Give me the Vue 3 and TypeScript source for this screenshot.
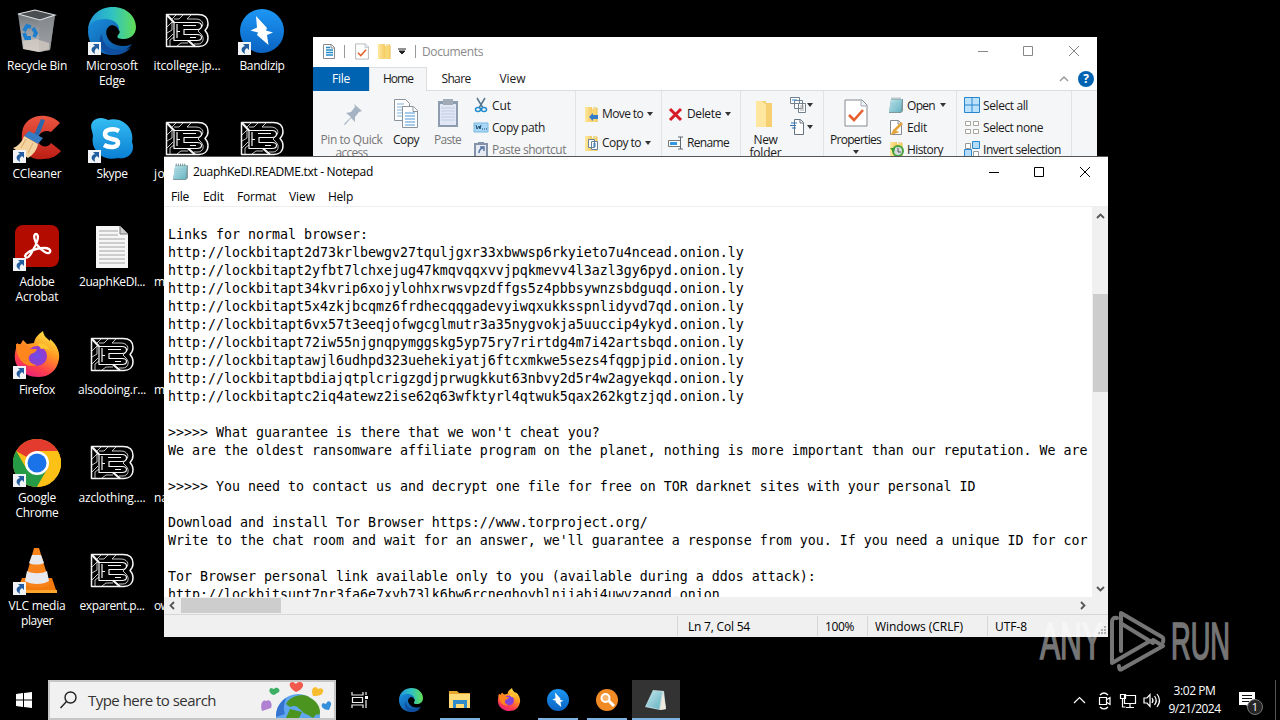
<script setup lang="ts">
import type { Directive } from 'vue'

interface DesktopLine { t: string; w: number }
interface DesktopItem { icon: string; lines: DesktopLine[]; shortcut?: boolean; left?: boolean }

/* Tunes letter spacing so a label takes the given width. */
const vFit: Directive<HTMLElement, number> = {
  mounted(el, binding) {
    const count = (el.textContent ?? '').trim().length
    const natural = el.getBoundingClientRect().width
    el.style.letterSpacing = `${(binding.value - natural) / count}px`
  },
}

const item = (icon: string, lines: [string, number][], shortcut = false, left = false): DesktopItem => ({
  icon,
  lines: lines.map(([t, w]) => ({ t, w })),
  shortcut,
  left,
})

const columns: DesktopItem[][] = [
  [
    item('bin', [['Recycle Bin', 60]]),
    item('ccleaner', [['CCleaner', 49]], true),
    item('acrobat', [['Adobe', 35], ['Acrobat', 43]], true),
    item('firefox', [['Firefox', 36]], true),
    item('chrome', [['Google', 38], ['Chrome', 43]], true),
    item('vlc', [['VLC media', 57], ['player', 32]], true),
  ],
  [
    item('edge', [['Microsoft', 52], ['Edge', 26]], true),
    item('skype', [['Skype', 31]], true),
    item('doc', [['2uaphKeDI...', 66]]),
    item('lockb', [['alsodoing.r...', 68]]),
    item('lockb', [['azclothing....', 67]]),
    item('lockb', [['exparent.p...', 65]]),
  ],
  [
    item('lockb', [['itcollege.jp...', 67]]),
    item('lockb', [['jo', 11]], false, true),
    item('none', [['m', 10]], false, true),
    item('none', [['m', 10]], false, true),
    item('none', [['na', 14]], false, true),
    item('none', [['ow', 15]], false, true),
  ],
  [item('bandizip', [['Bandizip', 45]], true), item('lockb', [])],
]

const note: string[] = [
  'Links for normal browser:',
  'http://lockbitapt2d73krlbewgv27tquljgxr33xbwwsp6rkyieto7u4ncead.onion.ly',
  'http://lockbitapt2yfbt7lchxejug47kmqvqqxvvjpqkmevv4l3azl3gy6pyd.onion.ly',
  'http://lockbitapt34kvrip6xojylohhxrwsvpzdffgs5z4pbbsywnzsbdguqd.onion.ly',
  'http://lockbitapt5x4zkjbcqmz6frdhecqqgadevyiwqxukksspnlidyvd7qd.onion.ly',
  'http://lockbitapt6vx57t3eeqjofwgcglmutr3a35nygvokja5uuccip4ykyd.onion.ly',
  'http://lockbitapt72iw55njgnqpymggskg5yp75ry7rirtdg4m7i42artsbqd.onion.ly',
  'http://lockbitaptawjl6udhpd323uehekiyatj6ftcxmkwe5sezs4fqgpjpid.onion.ly',
  'http://lockbitaptbdiajqtplcrigzgdjprwugkkut63nbvy2d5r4w2agyekqd.onion.ly',
  'http://lockbitaptc2iq4atewz2ise62q63wfktyrl4qtwuk5qax262kgtzjqd.onion.ly',
  '',
  ">>>>> What guarantee is there that we won't cheat you?",
  'We are the oldest ransomware affiliate program on the planet, nothing is more important than our reputation. We are',
  '',
  '>>>>> You need to contact us and decrypt one file for free on TOR darknet sites with your personal ID',
  '',
  'Download and install Tor Browser https://www.torproject.org/',
  "Write to the chat room and wait for an answer, we'll guarantee a response from you. If you need a unique ID for cor",
  '',
  'Tor Browser personal link available only to you (available during a ddos attack):',
  'http://lockbitsupt7nr3fa6e7xyb73lk6bw6rcneqhoyblniiabj4uwvzapqd.onion',
]
</script>

<template>
  <div class="desktop">
    <svg class="defs" width="0" height="0">
      <defs>
        <linearGradient id="gBin" x1="0" y1="0" x2="0" y2="1"><stop offset="0" stop-color="#70757a" /><stop offset=".6" stop-color="#a5a9ad" /><stop offset="1" stop-color="#c9c6c2" /></linearGradient>
        <linearGradient id="gEdgeA" x1="0" y1=".3" x2="1" y2=".3"><stop offset="0" stop-color="#2196d6" /><stop offset=".5" stop-color="#2fc2c4" /><stop offset="1" stop-color="#62de55" /></linearGradient>
        <linearGradient id="gEdgeB" x1="0" y1="0" x2="1" y2="1"><stop offset="0" stop-color="#1a8fdc" /><stop offset="1" stop-color="#0b4a97" /></linearGradient>
        <linearGradient id="gFox" x1=".8" y1="0" x2=".3" y2="1"><stop offset="0" stop-color="#fff04a" /><stop offset=".4" stop-color="#ff9a22" /><stop offset=".75" stop-color="#ff3f4b" /><stop offset="1" stop-color="#e5217a" /></linearGradient>
        <radialGradient id="gFoxIn"><stop offset="0" stop-color="#6b4de8" /><stop offset="1" stop-color="#9a38c9" /></radialGradient>
        <linearGradient id="gBandi" x1="0" y1="0" x2="0" y2="1"><stop offset="0" stop-color="#1d97f5" /><stop offset="1" stop-color="#0a63c2" /></linearGradient>
        <linearGradient id="gSkype" x1="0" y1="0" x2="0" y2="1"><stop offset="0" stop-color="#35bdf2" /><stop offset="1" stop-color="#0a7fd4" /></linearGradient>
        <linearGradient id="gCc" x1="0" y1="0" x2="0" y2="1"><stop offset="0" stop-color="#ea5540" /><stop offset="1" stop-color="#bd1d14" /></linearGradient>
        <linearGradient id="gPad" x1="0" y1="0" x2="1" y2="1"><stop offset="0" stop-color="#c4e8ee" /><stop offset="1" stop-color="#63b2c0" /></linearGradient>
        <linearGradient id="gFold" x1="0" y1="0" x2="1" y2="0"><stop offset="0" stop-color="#ffe9a0" /><stop offset="1" stop-color="#f4cb62" /></linearGradient>

        <symbol id="none" viewBox="0 0 48 48" />
        <symbol id="bin" viewBox="0 0 48 48">
          <path d="M5 7 42 8 37 43 26 45 10 42Z" fill="url(#gBin)" />
          <path d="M26 12 42 8 37 43 26 45Z" fill="#8b8e91" opacity=".65" />
          <path d="M5 7 22 3 42 8 27 13Z" fill="#4b4e50" stroke="#dfe2e4" stroke-width="1.1" />
          <path d="M10 34 23 32 36 36 36 42 26 45 11 42Z" fill="#d9cfc6" opacity=".7" />
          <g fill="none" stroke="#1b7fcd" stroke-width="3.800"><path d="m11 24 3-5 4 1" /><path d="m20 21 3 5-2 4" /><path d="m18 31-5 0-2-5" /></g>
        </symbol>
        <symbol id="edge" viewBox="0 0 48 48">
          <path d="M0 22C2 7 13 0 25 0c14 0 23 10 23 20 0 8-6 12-12 12-5 0-8-1-6-4 2-2 2-3 1-5-2-5-6-7-12-7C12 15 4 17 0 22Z" fill="url(#gEdgeA)" />
          <path d="M0 24C0 16 8 12 17 12c9 0 15 5 14 12-2-5-6-6-9-5-8 4-3 20 13 20 4 0 7-1 9-2-4 5-11 11-19 11C10 48 0 38 0 24Z" fill="url(#gEdgeB)" />
          <path d="M14 27c0 11 9 17 20 16 4 0 7-1 10-4-4 6-11 9-18 9C12 47 9 33 14 27Z" fill="#104f9f" />
          <path d="M19 25c0-5 4-8 8-6 4 2 4 6 3 8-2 3-1 5 1 7-7-1-12-4-12-9Z" fill="#000" />
        </symbol>
        <symbol id="lockb" viewBox="0 0 48 48" fill="none" stroke="#f4f4f4" stroke-linejoin="round">
          <path d="M3.500 7.500H35c7 0 10 4 10 9 0 3-1 5-3 7 2 2 3 4 3 7 0 6-4 9-9 9H3.500Z" stroke-width="1.500" />
          <path d="M11 15.500H34c6 0 6 7 0 7H21v5h13c6 0 6 6 0 6H11ZM14 17v14" stroke-width="1.200" />
          <path d="M20 18.500h13M17 24.500h-3M27 30.500h6" stroke-width="1" />
          <path d="M4 20l6-6M4 33l6-6M4 26l5-3v-8M7 39v-6l4-3M13 8l-4 4M20 8l-4 4h-5M28 8l-4 4h9c6 0 9 5 5 9l-3 3 3 3c4 4 2 10-3 10h-4M14 39l4-3h7" stroke-width=".8" />
          <path d="m4 8 7 7.500M25 33.500l7 6" stroke-width="2.200" />
        </symbol>
        <symbol id="bandizip" viewBox="0 0 48 48">
          <circle cx="24" cy="24" r="22" fill="url(#gBandi)" />
          <path d="m18 9 11 12-1 2.500 7 2-6 2.500 1.500 10L19 28l1-2.500-7.500-2 6.500-3Z" fill="#fff" />
        </symbol>
        <symbol id="ccleaner" viewBox="0 0 48 48">
          <path d="M47 8C35-4 11-1 9 18c-2 20 10 28 21 26 8 0 14-3 18-8L38 28c-2 4-9 5-12 0-4-7 4-15 12-11Z" fill="url(#gCc)" />
          <path d="M28 4l4 1-7 18-5-1Z" fill="#2b67ad" />
          <path d="m16 16 14 7-5 6-14-8Z" fill="#377bc2" />
          <path d="m11 21 14 8c-1 6-5 11-10 14L0 33c5-2 9-6 11-12Z" fill="#f3d3a0" />
          <path d="m8 33 5-9M15 38l5-10" stroke="#dca866" />
        </symbol>
        <symbol id="skype" viewBox="0 0 48 48">
          <path d="M4 16C1 8 6 3 13 3c3 0 5 1 7 2C35 1 47 14 44 27c4 10-4 18-14 16C15 47 2 35 5 21Z" fill="url(#gSkype)" />
          <path d="M31 16c-5-3-14-2-14 3 0 7 13 3 13 9 0 5-9 5-14 2" fill="none" stroke="#fff" stroke-width="4.500" />
        </symbol>
        <symbol id="acrobat" viewBox="0 0 48 48">
          <rect x="2" y="2" width="44" height="42" rx="8" fill="#b30b00" />
          <path d="M12 33c2-5 12-8 19-8 5 0 7 2 6 4-2 3-8-1-12-6-4-5-5-12-2-12 4 0 1 10-3 16-3 6-6 10-8 6Z" fill="none" stroke="#fff" stroke-width="2.300" />
        </symbol>
        <symbol id="firefox" viewBox="0 0 48 48">
          <path d="m2 22 2-10 3 2 3-5 4 4 7-1c1-6 5-9 9-12 1 6 4 7 7 10V8c8 6 10 15 9 20-2 12-10 18-21 18C10 46 0 35 2 22Z" fill="url(#gFox)" />
          <circle cx="24" cy="25" r="10" fill="url(#gFoxIn)" />
          <path d="M3 13c7 0 11 2 13 5h8c-1 4-5 4-7 6-3 3-1 9 7 10-13 4-21-7-21-21Z" fill="#ff861e" />
          <path d="M25 13c5-2 10 1 12 7-3-3-6-3-9-2Z" fill="#ffc633" />
        </symbol>
        <symbol id="chrome" viewBox="0 0 48 48">
          <circle cx="24" cy="24" r="24" fill="#fbc116" />
          <path d="M24 24 3.200 12A24 24 0 0 1 44.800 12L24 12Z" fill="#e33b2e" />
          <path d="M3.200 12A24 24 0 0 0 24 48L34.400 30 24 36 13.600 30Z" fill="#259b45" />
          <path d="M44.800 12A24 24 0 0 1 24 48L34.400 30 24 12Z" fill="#fbc116" />
          <circle cx="24" cy="24" r="12" fill="#fff" /><circle cx="24" cy="24" r="9.500" fill="#1a73e8" />
        </symbol>
        <symbol id="vlc" viewBox="0 0 48 48">
          <path d="M9 31h30l5 15H3Z" fill="#f27b0c" /><path d="M4 43h40v3H4Z" fill="#ffa52e" />
          <path d="m21 1 5 0 11 36c-5 5-21 5-26 0Z" fill="#f8831a" />
          <path d="m19 8 9 0 3 8c-4 2-11 2-15 0ZM14 24c5 3 15 3 20 0l2 10c-6 4-18 4-24 0Z" fill="#e8e9ec" />
        </symbol>
        <symbol id="doc" viewBox="0 0 48 48">
          <path d="M8 3h24l8 8v34H8Z" fill="#f6f6f6" /><path d="M32 3v8h8" fill="#ccc" stroke="#777" />
          <path d="M11 8h19M11 12h19M11 16h26M11 20h26M11 24h26M11 28h26M11 32h26M11 36h26M11 40h26" stroke="#a3a3a3" stroke-width="1.200" />
        </symbol>
        <symbol id="arrow" viewBox="0 0 13 13"><path d="M0 0h13v13H0Z" fill="#f1f3f6" /><path d="M5 2h6v6L9 6c-2 1-3 3-2 6-5-3-4-7 0-8Z" fill="#235d9f" /></symbol>

        <symbol id="pad" viewBox="0 0 16 16">
          <path d="M3 2h12v12l-2 2H1Z" fill="#7c989b" /><path d="M3 2h11l-1 13H1Z" fill="url(#gPad)" />
          <path d="M4 .5v2.500M6 .5v2.500M8 .5v2.500M10 .5v2.500M12 .5v2.500" stroke="#6c8688" stroke-width=".8" /><path d="M3 6h9M3 8h9M3 10h9" stroke="#8ac5ce" stroke-width=".6" />
        </symbol>
        <symbol id="folder" viewBox="0 0 16 16"><path d="M2 1h7v2h5v13H2Z" fill="#f8d775" /><path d="M2 1h7v14l-7 1Z" fill="url(#gFold)" /><path d="M10 2h4v14" fill="none" stroke="#eabe49" /></symbol>
        <symbol id="page" viewBox="0 0 16 16"><path d="M2.500 1.500h8l3 3v11h-11Z" fill="#fff" stroke="#858b91" /><path d="M10 1.500v3.500h3.500" fill="none" stroke="#858b91" /></symbol>
        <symbol id="pagecheck" viewBox="0 0 24 28"><path d="M1 1h17l5 5v21H1Z" fill="#fff" stroke="#858b91" /><path d="M17 1v6h6" fill="#e7eef5" stroke="#a7adb3" /><path d="m5 16 5 5 9-10" fill="none" stroke="#e6602d" stroke-width="2.600" /></symbol>
        <symbol id="taskFolder" viewBox="0 0 24 24"><path d="M1 3h8l2 2h11v15H1Z" fill="#e7a72f" /><path d="M1 6h21v14H1Z" fill="#ffdc78" /><path d="M5 12h14v8h-3v-4H8v4H5Z" fill="#318cca" /></symbol>
      </defs>
    </svg>

    <main class="icons">
      <div v-for="(col, c) in columns" :key="c" class="icon-column">
        <div v-for="(entry, i) in col" :key="i" class="shortcut" :class="{ left: entry.left }">
          <div class="picture">
            <svg width="48" height="48"><use :href="'#' + entry.icon" /></svg>
            <svg v-if="entry.shortcut" class="badge" width="13" height="13"><use href="#arrow" /></svg>
          </div>
          <div v-for="line in entry.lines" :key="line.t" class="name"><span v-fit="line.w">{{ line.t }}</span></div>
        </div>
      </div>
    </main>

    <section class="explorer">
      <header class="ex-title">
        <svg width="16" height="16"><use href="#page" /><path d="M5 4.500h4M5 7h7M5 9.500h7M5 12h7" stroke="#238ac6" stroke-width="1.500" /></svg>
        <i class="tick" />
        <svg class="q1" width="14" height="17"><use href="#pagecheck" width="14" height="17" /></svg>
        <svg class="q2" width="16" height="16"><use href="#folder" /></svg>
        <svg class="q3" width="8" height="7"><path d="M0 1h8M1 3h6L4 6Z" stroke="#222" stroke-width="1" fill="#222" /></svg>
        <i class="tick second" />
        <span v-fit="61" class="ex-name">Documents</span>
        <svg class="controls" width="102" height="12" fill="none" stroke="#888"><path d="M0 6.500h10M45.500 1.500h9v9h-9ZM91 1l10 10M101 1 91 11" /></svg>
      </header>
      <nav class="tabs">
        <div class="tab file"><span v-fit="18">File</span></div>
        <div class="tab home"><span v-fit="30">Home</span></div>
        <div class="tab share"><span v-fit="29">Share</span></div>
        <div class="tab view"><span v-fit="26">View</span></div>
        <svg class="collapse" width="10" height="7"><path d="m1 6 4-4 4 4" fill="none" stroke="#999" stroke-width="1.500" /></svg>
        <div class="help">?</div>
      </nav>
      <div class="ribbon">
        <div class="group clip">
          <div class="big pin dim"><svg width="26" height="32"><path d="m15 6 8 7-3 1-4 5v5l-4-4-6 7-1-1 7-7-5-4 5-1 4-5Z" fill="#a5b3c2" /></svg><span v-fit="62">Pin to Quick</span><span v-fit="32">access</span></div>
          <div class="big copy"><svg width="26" height="32" fill="#fff" stroke="#8b949c"><path d="M1.500 1.500h11l4 4v17h-15Z" /><path d="M4 6h7M4 9h9M4 12h9M4 15h9M4 18h9" stroke="#7fb1dc" /><path d="M9.500 8.500h11l4 4v17h-15Z" /><path d="M20 8.500v5h5" /><path d="M12 15h10M12 18h10M12 21h10M12 24h10M12 27h10" stroke="#4d95d6" /></svg><span v-fit="26">Copy</span></div>
          <div class="big paste dim"><svg width="22" height="32"><path d="M1 3h20v26H1Z" fill="#8e9caf" /><path d="M3 6h16v21H3Z" fill="#e0e8f5" /><path d="M6 1h10v6H6Z" fill="#a2abb9" /><path d="M4 10h14M4 13h14M4 16h14M4 19h14M4 22h14" stroke="#c1cde3" /></svg><span v-fit="27">Paste</span></div>
          <div class="small-list">
            <div class="small"><svg width="16" height="16" fill="none" stroke="#57778f" stroke-width="1.500"><path d="m4 1 6 10M12 1 6 11" /><ellipse cx="5" cy="12.500" rx="2.500" ry="2" stroke="#218bd0" /><ellipse cx="11" cy="12.500" rx="2.500" ry="2" stroke="#218bd0" /></svg><span v-fit="19">Cut</span></div>
            <div class="small"><svg width="16" height="16"><path d="M1 4h14v9H1Z" fill="#a9d7f7" stroke="#79b5df" /><path d="m3 6 1 4 2-3 1 3 1-4M9 10h1M11 10h1M13 10h1" fill="none" stroke="#17476b" /></svg><span v-fit="53">Copy path</span></div>
            <div class="small dim"><svg width="16" height="16"><path d="M2 3h12v13H2Z" fill="#e5eaf3" stroke="#8493aa" stroke-width="2" /><path d="M5 1h6v3H5Z" fill="#8493aa" /><path d="M6 12q0-4 4-5M7 6h4v4" fill="none" stroke="#5976a2" stroke-width="1.500" /></svg><span v-fit="74">Paste shortcut</span></div>
          </div>
        </div>
        <div class="group organize move">
          <div class="small"><svg width="16" height="16"><use href="#folder" /><path d="m6 11 4-4v2h5v4h-5v2Z" fill="#347dcb" /></svg><span v-fit="41">Move to</span><i class="caret" /></div>
          <div class="small"><svg width="16" height="16"><use href="#folder" /><path d="M5.500 4.500h6v8h-6ZM8.500 6.500h6v8h-6Z" fill="#fff" stroke="#66839b" /><path d="M10 9h3M10 11h3" stroke="#3384c4" /></svg><span v-fit="39">Copy to</span><i class="caret" /></div>
        </div>
        <div class="group organize remove">
          <div class="small"><svg width="16" height="16"><path d="m2 3 11 11M13 3 2 14" stroke="#d51b25" stroke-width="3" /></svg><span v-fit="34">Delete</span><i class="caret" /></div>
          <div class="small"><svg width="16" height="16"><path d="M.5 5.500h12v6H.5Z" fill="#fff" stroke="#777" /><path d="M2 7h7v3H2Z" fill="#3297e2" /><path d="M10 2h5M12.500 2v12M10 14h5" stroke="#656b72" /></svg><span v-fit="42">Rename</span></div>
        </div>
        <div class="group new">
          <div class="big"><svg width="28" height="32"><path d="M4 3h10v2h6v24H4Z" fill="#f5cf70" /><path d="M4 3h6l4 4v22H4Z" fill="#ffe7a0" /></svg><span v-fit="24">New</span><span v-fit="32">folder</span></div>
          <div class="small-list">
            <div class="small"><svg width="17" height="16" fill="#fff" stroke="#72818e"><path d="M.5.500h9v6h-9ZM4.500 3.500h8v8h-8ZM8.500 6.500h7v9h-7Z" /><path d="M2 3h5" stroke="#2787c7" /><path d="M10 9h4M10 11h4M10 13h4" stroke="#aaa" /></svg><i class="caret" /></div>
            <div class="small"><svg width="17" height="16" fill="#fff" stroke="#66727d"><path d="M4.500.500h6l3 3v12h-9Z" /><path d="M10 .5V4h3" /><path d="M1 4h6M0 6.500h6M2 9h4" stroke="#2f77bc" /></svg><i class="caret" /></div>
          </div>
        </div>
        <div class="group open">
          <div class="big prop"><svg width="24" height="32"><use href="#pagecheck" y="1" width="24" height="28" /></svg><span v-fit="51">Properties</span><i class="caret" /></div>
          <div class="small-list">
            <div class="small"><svg width="16" height="16"><use href="#pad" /></svg><span v-fit="28">Open</span><i class="caret" /></div>
            <div class="small"><svg width="16" height="16"><use href="#page" /><path d="m6 12 8-8M5 14l1-2 2 1Z" stroke="#e4a43c" stroke-width="2.500" /></svg><span v-fit="20">Edit</span></div>
            <div class="small"><svg width="16" height="16"><use href="#folder" /><circle cx="10" cy="10" r="5" fill="#d3dde0" stroke="#48a43c" stroke-width="2" /><path d="M10 7v4h3" stroke="#555" fill="none" /><path d="m2 7 5 0-1 5Z" fill="#3a9d34" /></svg><span v-fit="36">History</span></div>
          </div>
        </div>
        <div class="group select">
          <div class="small-list">
            <div class="small"><svg width="16" height="16"><path d="M.5.500h15v15H.5ZM8 1v14M1 8h14" fill="#bce2fb" stroke="#2886cf" /></svg><span v-fit="45">Select all</span></div>
            <div class="small"><svg width="16" height="16" fill="#fff" stroke="#aaa59d"><path d="M1.500 2.500h5v4h-5ZM9.500 2.500h5v4h-5ZM1.500 10.500h5v4h-5ZM9.500 10.500h5v4h-5Z" /></svg><span v-fit="60">Select none</span></div>
            <div class="small"><svg width="16" height="16"><path d="M8.500.500h7v7h-7ZM.5 8.500h7v7h-7Z" fill="#b3dcfa" stroke="#2d87cc" /><path d="M1.500 2.500h5v5h-5ZM9.500 10.500h5v5h-5Z" fill="#fff" stroke="#999" /></svg><span v-fit="78">Invert selection</span></div>
          </div>
        </div>
      </div>
    </section>

    <section class="notepad">
      <header class="np-title">
        <svg width="17" height="17"><use href="#pad" /></svg><span v-fit="180">2uaphKeDI.README.txt - Notepad</span>
        <svg class="controls" width="102" height="12" fill="none" stroke="#000"><path d="M0 6.500h10M45.500 1.500h9v9h-9ZM91 1l10 10M101 1 91 11" /></svg>
      </header>
      <nav class="menu">
        <div class="m-file"><span v-fit="18">File</span></div><div class="m-edit"><span v-fit="21">Edit</span></div><div class="m-format"><span v-fit="39">Format</span></div><div class="m-view"><span v-fit="26">View</span></div><div><span v-fit="25">Help</span></div>
      </nav>
      <div class="editor">
        <div class="sheet"><div v-for="(line, i) in note" :key="i" class="line">{{ line }}</div></div>
        <div class="vbar">
          <svg width="9" height="6"><path d="m1 5 3.500-3.500L8 5" /></svg><div class="vthumb" /><svg width="9" height="6"><path d="m1 1 3.500 3.500L8 1" /></svg>
        </div>
      </div>
      <div class="hbar"><svg width="6" height="9"><path d="M5 1 1.500 4.500 5 8" /></svg><div class="hthumb" /><svg class="hright" width="6" height="9"><path d="m1 1 3.500 3.500L1 8" /></svg></div>
      <footer class="status">
        <div class="s-pos"><span v-fit="62">Ln 7, Col 54</span></div><div class="s-zoom"><span v-fit="29">100%</span></div><div class="s-eol"><span v-fit="88">Windows (CRLF)</span></div>
        <div class="s-enc"><span v-fit="32">UTF-8</span><svg class="grip" width="9" height="9" fill="#b0b0b0"><path d="M6 0h2v2H6ZM3 3h2v2H3ZM6 3h2v2H6ZM0 6h2v2H0ZM3 6h2v2H3ZM6 6h2v2H6Z" /></svg></div>
      </footer>
    </section>

    <footer class="taskbar">
      <div class="start"><svg width="16" height="16" fill="#fff"><path d="M0 2 7 1v6.500H0ZM8 1l8-1v7.500H8ZM0 8.500h7V15l-7-1ZM8 8.500h8V16l-8-1Z" /></svg></div>
      <div class="search">
        <svg width="18" height="18" fill="none" stroke="#222" stroke-width="1.400"><circle cx="10.500" cy="6.500" r="5.500" /><path d="m6.500 10.500-6 6.500" /></svg><span v-fit="128">Type here to search</span>
        <svg class="earth" width="72" height="38">
          <circle cx="38" cy="36" r="22" fill="#5fa6ef" /><path d="M26 24c4-8 18-12 24-6 8 3 12 13 9 17-5-3-3 5-8 2-4-4-7-2-9-6-4-2-4-7-12-4ZM30 29l12 3-3 6H26Z" fill="#4a941f" /><path d="M16 37c0-9 4-15 10-19-2 7-3 10-1 16Z" fill="#3474ce" />
          <path d="M36 12c-7-4-8-9-4-10 2 0 3 1 4 2 1-3 8-3 7 2-1 3-4 5-7 6Z" fill="#f25a4d" />
          <path d="M14 15c-5-1-6-6-3-7l3 1c2-3 7 0 5 3Z" fill="#3caf65" /><path d="M53 16c-2-5-1-9 3-9l2 2c3-2 6 0 5 3-1 4-6 4-10 4Z" fill="#f8bc31" />
          <path d="M2 31c-2-6 0-12 4-10 4-3 7 3 5 7Z" fill="#b080d3" /><path d="M69 30c-7 0-9-5-6-7l3 1c2-5 6-2 5 1Z" fill="#368fda" />
        </svg>
      </div>
      <div class="task view-btn"><svg width="18" height="18" fill="none" stroke="#eee" stroke-width="1.200"><path d="M1 1v3h11V1M1 17v-3h11v3M1.500 6.500h10v5h-10ZM15 1v3M15 9v8" /><path d="M14 5h3v3h-3Z" fill="#fff" stroke="none" /></svg></div>
      <div class="task t-edge"><svg width="24" height="24"><use href="#edge" /></svg></div>
      <div class="task run gap9"><svg width="24" height="24"><use href="#taskFolder" /></svg></div>
      <div class="task gap9"><svg width="24" height="24"><use href="#firefox" /></svg></div>
      <div class="task run gap9"><svg width="24" height="24"><use href="#bandizip" /></svg></div>
      <div class="task run gap9"><svg width="24" height="24"><circle cx="12" cy="12" r="11" fill="#f08a24" /><circle cx="10.500" cy="10" r="4" fill="#f8b570" stroke="#fff" stroke-width="2" /><path d="m14 13 5 5" stroke="#fff" stroke-width="3" /></svg></div>
      <div class="task run active"><svg width="24" height="24"><path d="m9 2 11 1 2 18-6 1-15-3Z" fill="#b9d5da" /><path d="m9 3 9 1-3 17-13-3Z" fill="url(#gPad)" /><path d="m19 3 3 18-6 1Z" fill="#efeadc" /></svg></div>
      <div class="tray">
        <svg width="90" height="20" fill="none" stroke="#fff" stroke-width="1.200">
          <path d="m1 13 5.500-5.500 5.500 5.500M26.500 7.500h7v7h-7ZM34 9.500l3-2v7l-3-2M27 5q4-4 8 0M27 17q4 4 8 0" />
          <path d="M51.500 5.500h11v8h-11ZM57 14v3M53 17.500h8M47.500 4.500h5v4h-5ZM49.500 9v8h3" /><path d="M71 8h3l3-3.500v12L74 13h-3ZM79 8q2 2.500 0 5M81.500 6q3.500 4.500 0 9M84 4q5 6.500 0 13" />
        </svg>
      </div>
      <div class="clock"><div><span v-fit="42">3:02 PM</span></div><div><span v-fit="52">9/21/2024</span></div></div>
      <div class="notice"><svg width="17" height="17"><path d="M0 0h16v13h-5v4l-4-4H0Z" fill="#fff" /><path d="M3 3.500h10M3 6.500h10M3 9.500h7" stroke="#111" /></svg><b>1</b></div>
      <i class="peek" />
    </footer>

    <svg class="watermark" width="196" height="64" fill="#fff">
      <text x="3" y="50" textLength="62" lengthAdjust="spacingAndGlyphs">ANY</text>
      <text x="134" y="50" textLength="59" lengthAdjust="spacingAndGlyphs">RUN</text>
      <g fill="none" stroke="#fff" stroke-width="4" stroke-linejoin="round" stroke-linecap="round"><path d="M80 9q-5-1-5 4v41l38-22M84 42V4l41 24q2 1 1 5M85 15l31 19" /><path d="m116 31 10 6-41 23q-3 2-3-3" /></g>
    </svg>
  </div>
</template>

<style>
html, body { margin: 0; background: #000; overflow: hidden; }
</style>

<style scoped>
.desktop { position: relative; width: 1280px; height: 720px; overflow: hidden; background: #000; font: 12px/15px "Open Sans", "Noto Sans", sans-serif; color: #1a1a1a; white-space: nowrap; }
.desktop * { box-sizing: border-box; }
svg { display: block; flex: none; }
.defs { position: absolute; }
.icons { display: flex; height: 680px; }
.icon-column { display: flex; flex-direction: column; width: 75px; }
.shortcut { height: 108px; padding-top: 7px; width: 74px; display: flex; flex-direction: column; align-items: center; color: #fff; }
.shortcut.left { align-items: flex-start; padding-left: 4px; }
.shortcut.left .picture { margin-left: 9px; }
.picture { position: relative; width: 48px; height: 48px; margin-bottom: 3px; }
.badge { position: absolute; left: 0; bottom: 0; }
.name { height: 15px; line-height: 15px; }

.explorer { position: absolute; left: 313px; top: 37px; width: 784px; height: 125px; background: #fff; display: flex; flex-direction: column; }
.ex-title { height: 30px; display: flex; align-items: center; padding: 0 17px 2px 8px; color: #8a8a8a; }
.tick { width: 1px; height: 13px; background: #999; margin-left: 7px; }
.q1 { margin-left: 10px; }
.q2 { margin-left: 7px; }
.q3 { margin-left: 6px; }
.tick.second { margin-left: 9px; }
.ex-name { margin-left: 6px; }
.controls { margin-left: auto; }
.tabs { height: 24px; display: flex; align-items: center; border-bottom: 1px solid #dcdddf; flex: none; }
.tab { height: 24px; display: flex; align-items: center; justify-content: center; }
.file { width: 56px; background: #0063b1; color: #fff; }
.home { width: 58px; background: #f5f6f7; border: 1px solid #dcdddf; border-bottom: 0; padding-bottom: 2px; }
.share { width: 58px; }
.view { width: 55px; }
.collapse { margin-left: auto; }
.help { width: 16px; height: 16px; margin: 0 3px 0 9px; border-radius: 50%; background: #0063b1; color: #fff; text-align: center; line-height: 16px; font-weight: 700; }
.ribbon { flex: 1; display: flex; background: #f5f6f7; overflow: hidden; }
.group { height: 80px; padding-top: 3px; border-right: 1px solid #e1e3e5; display: flex; flex: none; }
.clip { width: 263px; }
.big { display: flex; flex-direction: column; align-items: center; line-height: 13px; padding-top: 4px; }
.big > svg { margin-bottom: 3px; }
.pin { width: 77px; }
.copy { width: 32px; }
.paste { width: 51px; }
.dim { color: #777; }
.small-list { display: flex; flex-direction: column; }
.small { height: 22px; display: flex; align-items: center; gap: 3px; }
.caret { width: 0; height: 0; border: 3px solid transparent; border-top: 4px solid #333; border-bottom: 0; margin-left: 2px; }
.organize { flex-direction: column; padding-top: 8px; }
.organize .small { height: 29px; }
.organize .caret { margin-left: 1px; }
.move { width: 86px; padding-left: 7px; }
.remove { width: 79px; padding-left: 6px; }
.new { width: 83px; }
.new .big { width: 49px; }
.new .caret { margin-left: -3px; }
.open { width: 133px; padding-left: 6px; }
.prop { width: 51px; margin-right: 7px; }
.prop .caret { margin: 4px 0 0; }
.select { width: 115px; padding-left: 7px; }

.notepad { position: absolute; left: 164px; top: 156px; width: 944px; height: 481px; background: #fff; border-top: 1px solid #555; display: flex; flex-direction: column; color: #000; }
.np-title { height: 30px; display: flex; align-items: center; padding: 0 17px 2px 8px; gap: 4px; }
.np-title .controls { margin-top: 1px; }
.menu { height: 20px; display: flex; padding-left: 7px; align-items: center; border-bottom: 1px solid #eee; }
.m-file { width: 32px; }
.m-edit { width: 34px; }
.m-format { width: 52px; }
.m-view { width: 39px; }
.editor { height: 390px; display: flex; }
.sheet { width: 924px; height: 390px; overflow: hidden; padding: 19px 0 0 4px; margin-right: 4px; font: 13.29px/18px "DejaVu Sans Mono", monospace; color: #000; }
.line { height: 18px; white-space: pre; }
.vbar { width: 16px; background: #f0f0f0; display: flex; flex-direction: column; align-items: center; padding: 6px 0 5px; }
.vthumb { width: 15px; height: 98px; background: #cdcdcd; margin: 75px 0 auto; }
.vbar svg, .hbar svg { fill: none; stroke: #555; stroke-width: 1.8; }
.hbar { height: 17px; background: #f0f0f0; display: flex; align-items: center; padding-left: 5px; }
.hthumb { width: 100px; height: 15px; background: #cdcdcd; margin-left: 6px; }
.hright { margin: 0 22px 0 auto; }
.status { height: 23px; background: #f0f0f0; border-top: 1px solid #d7d7d7; display: flex; justify-content: flex-end; }
.status div { border-left: 1px solid #d7d7d7; display: flex; align-items: center; height: 20px; margin-top: 1px; }
.s-pos { width: 140px; padding-left: 10px; }
.s-zoom { width: 50px; padding-left: 7px; }
.s-eol { width: 120px; padding-left: 7px; }
.s-enc { width: 121px; padding-left: 7px; }
.grip { margin: 9px 1px 0 auto; }

.taskbar { position: absolute; left: 0; top: 680px; width: 1280px; height: 40px; background: #000; display: flex; color: #fff; }
.start { width: 48px; display: flex; align-items: center; justify-content: center; }
.search { width: 288px; border: 2px solid #c6c6c6; background: #f1f1f1; display: flex; align-items: center; padding-left: 10px; color: #333; font-size: 15px; line-height: 20px; }
.search > span { margin-left: 10px; }
.earth { margin: 0 2px 0 auto; align-self: flex-end; }
.task { display: flex; align-items: center; justify-content: center; height: 40px; width: 40px; flex: none; }
.view-btn { margin-left: 4px; }
.t-edge { margin-left: 11px; }
.gap9 { margin-left: 9px; }
.run { border-bottom: 2px solid #7db2e2; padding-top: 2px; }
.active { width: 48px; margin-left: 5px; background: #333; }
.tray { margin-left: 393px; display: flex; align-items: center; }
.clock { width: 69px; padding: 2px 0 0 0; margin-left: -3px; text-align: center; line-height: 18px; flex: none; }
.notice { position: relative; width: 44px; padding: 12px 0 0 10px; flex: none; }
.notice b { position: absolute; left: 18px; top: 19px; width: 16px; height: 16px; border-radius: 50%; border: 1px solid #777; background: #252525; font: 11px/14px "Open Sans", sans-serif; text-align: center; }
.peek { width: 1px; height: 40px; background: #555; margin: 0 4px 0 auto; }
.watermark { position: absolute; left: 1037px; top: 609px; opacity: .46; }
.watermark text { font: 52px "Liberation Sans", sans-serif; stroke: #fff; stroke-width: 1.6px; }
</style>
